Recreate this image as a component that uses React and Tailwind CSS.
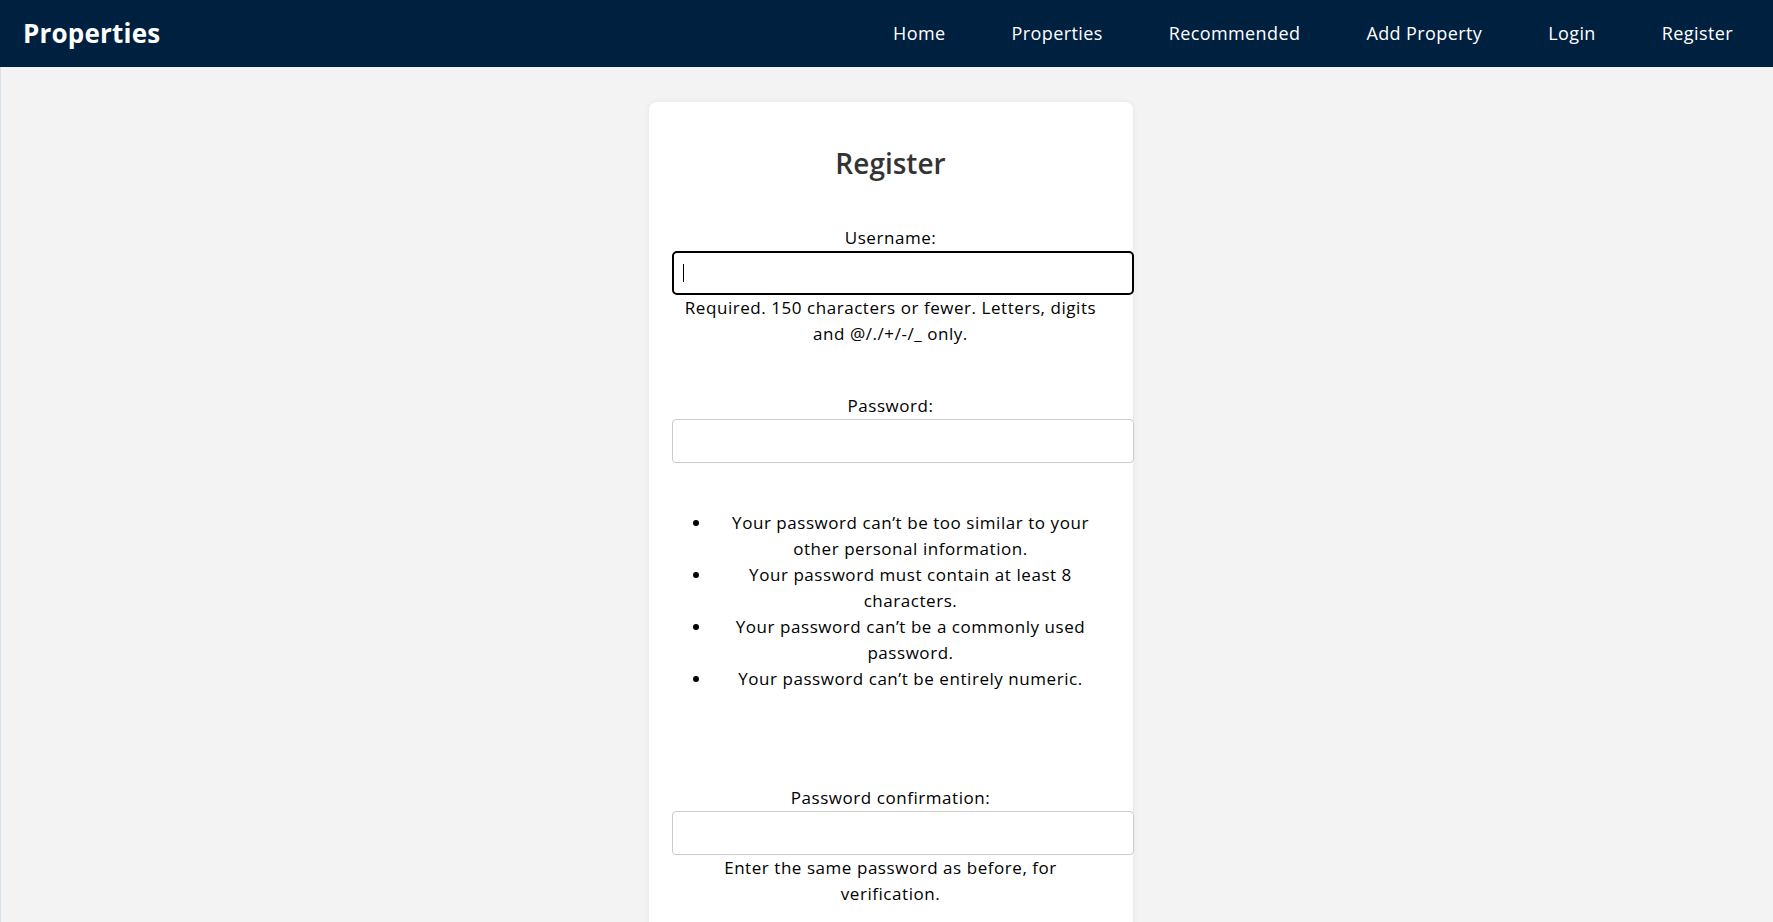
import React from 'react'

const navLinks = ['Home', 'Properties', 'Recommended', 'Add Property', 'Login', 'Register']

const passwordRules = [
  'Your password can’t be too similar to your other personal information.',
  'Your password must contain at least 8 characters.',
  'Your password can’t be a commonly used password.',
  'Your password can’t be entirely numeric.',
]

function Navbar() {
  return (
    <nav className="h-[67px] bg-[#00203f] flex items-center justify-between pl-[23px] pr-[40px]">
      <span className="text-white text-[26px] font-bold tracking-[0.2px]">Properties</span>
      <ul className="flex items-center gap-[66px]">
        {navLinks.map((link) => (
          <li key={link}>
            <a href="#" className="text-white text-[18px] font-medium tracking-[0.4px]">
              {link}
            </a>
          </li>
        ))}
      </ul>
    </nav>
  )
}

function Field({ label, focused, children }) {
  return (
    <div className="flex flex-col">
      <label className="block">{label}</label>
      {focused ? (
        <div className="relative w-[462px] h-[44px]">
          <input
            type="text"
            className="box-border w-[462px] h-[44px] rounded-[5px] border-2 border-black bg-white px-[9px] outline-none"
          />
          {/* caret */}
          <span className="absolute left-[11px] top-[13px] w-[1px] h-[18px] bg-black" />
        </div>
      ) : (
        <input
          type="text"
          className="box-border w-[462px] h-[44px] rounded-[4px] border border-[#cccccc] bg-white px-[10px] outline-none"
        />
      )}
      {children}
    </div>
  )
}

export default function App() {
  return (
    <div className="min-h-screen bg-[#f3f3f3] text-black" style={{ fontFamily: '"Open Sans", sans-serif' }}>
      <Navbar />
      <main className="border-l border-[#d8e0e9] flex justify-center pl-[7px] pt-[35px] min-h-[855px]">
        <div className="w-[484px] bg-white rounded-[8px] shadow-[0_0_6px_rgba(0,0,0,0.06)] px-[23px] pt-[44px] text-center text-[17px] leading-[26px] tracking-[0.55px]">
          <h2 className="text-[28px] leading-[34px] font-semibold text-[#333333] tracking-normal">Register</h2>

          <div className="mt-[45px]">
            <Field label="Username:" focused>
              <span className="block">
                Required. 150 characters or fewer. Letters, digits and @/./+/-/_ only.
              </span>
            </Field>
          </div>

          <div className="mt-[46px]">
            <Field label="Password:">
              <ul className="list-disc pl-[40px] mt-[47px]">
                {passwordRules.map((rule) => (
                  <li key={rule}>{rule}</li>
                ))}
              </ul>
            </Field>
          </div>

          <div className="mt-[93px]">
            <Field label="Password confirmation:">
              <span className="block px-[40px]">Enter the same password as before, for verification.</span>
            </Field>
          </div>

          <div className="h-[40px]" />
        </div>
      </main>
    </div>
  )
}
